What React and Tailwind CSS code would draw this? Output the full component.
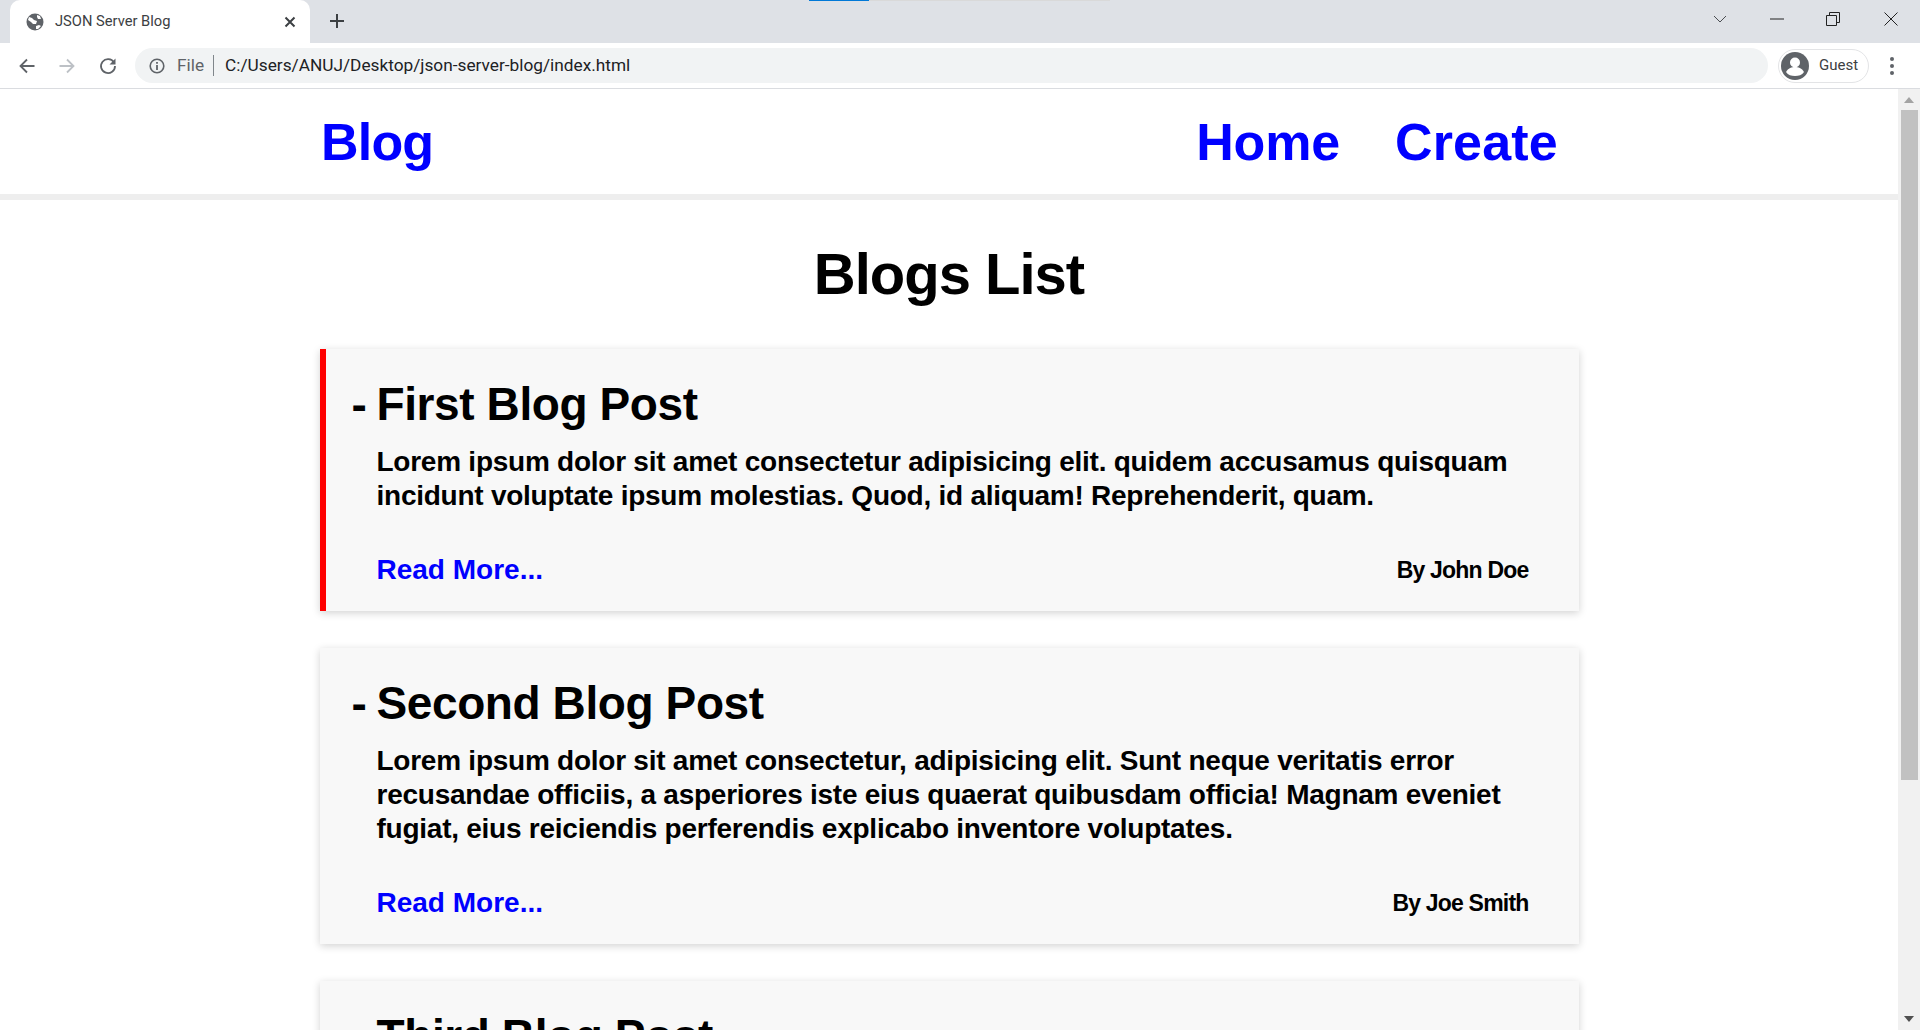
import React from "react";

function Globe() {
  return (
    <svg width="18" height="18" viewBox="0 0 18 18" className="shrink-0">
      <circle cx="9" cy="9" r="8.5" fill="#5f6368" />
      <path d="M3 4l3 1 2 2 3 1-1 3H7L5 9 2 7zM11 2l3 1 1 3-3 0-1-2zM10 13l3-1 2 1-3 3-2 0z" fill="#fff" />
    </svg>
  );
}

function Post({ title, lines, author, accent }) {
  return (
    <div className={`${accent ? "border-l-[6px] border-[#ff0000] pl-[26px]" : "pl-[32px]"} shrink-0 bg-[#f8f8f8] pr-[50px] pt-[30px] pb-[24px] shadow-[0_2px_8px_rgba(0,0,0,0.18)] mb-[37px]`}>
      <h2 className="flex text-[46px] leading-[50px] font-bold text-black tracking-[-0.4px]">
        <span className="w-[25px] shrink-0">-</span>
        <span>{title}</span>
      </h2>
      <div className="ml-[25px] mt-[16px] text-[28px] leading-[34px] font-bold text-black tracking-[-0.25px]">
        {lines.map((l) => (
          <div key={l} className="whitespace-nowrap">{l}</div>
        ))}
      </div>
      <div className="ml-[25px] mt-[40px] flex items-center justify-between">
        <a className="text-[28px] leading-[34px] font-bold text-[#0000ff]">Read More...</a>
        <span className="text-[23px] leading-[34px] font-bold text-black tracking-[-0.8px]">{author}</span>
      </div>
    </div>
  );
}

export default function App() {
  return (
    <div className="flex h-[1030px] w-[1920px] flex-col overflow-hidden bg-white font-['Liberation_Sans',sans-serif]">
      {/* tab strip */}
      <div className="relative flex h-[43px] shrink-0 items-end bg-[#dee1e6]">
        <div className="absolute left-[809px] top-0 h-px w-[60px] bg-[#0078d7]" />
        <div className="absolute left-[869px] top-0 h-px w-[241px] bg-[#d9d9d9]" />
        <div className="ml-[10px] flex h-[43px] w-[300px] items-center rounded-t-[10px] bg-white pl-[16px] pr-[14px]">
          <Globe />
          <span className="ml-[11px] flex-1 font-['Roboto',sans-serif] text-[14.7px] text-[#3c4043]">JSON Server Blog</span>
          <svg width="12" height="12" viewBox="0 0 12 12"><path d="M1.5 1.5l9 9M10.500 1.5l-9 9" stroke="#3c4043" strokeWidth="2" /></svg>
        </div>
        <svg className="ml-[19px] mb-[14px]" width="16" height="16" viewBox="0 0 16 16"><path d="M8 1v14M1 8h14" stroke="#3c4043" strokeWidth="2" /></svg>
        <div className="ml-auto mb-[17px] flex items-center">
          <svg width="14" height="9" viewBox="0 0 14 9"><path d="M1 1l6 6 6-6" fill="none" stroke="#4a4d51" strokeWidth="1" /></svg>
          <svg className="ml-[43px]" width="14" height="2" viewBox="0 0 14 2"><path d="M0 1h14" stroke="#222" strokeWidth="1" /></svg>
          <svg className="ml-[42px]" width="14" height="14" viewBox="0 0 14 14"><path d="M.5 3.500h10v10H.5zM3.500 3.500v-3h10v10h-3" fill="none" stroke="#222" strokeWidth="1" /></svg>
          <svg className="ml-[44px] mr-[22px]" width="14" height="14" viewBox="0 0 14 14"><path d="M.5.5l13 13M13.500.5l-13 13" stroke="#222" strokeWidth="1" /></svg>
        </div>
      </div>
      {/* toolbar */}
      <div className="flex h-[46px] shrink-0 items-center border-b border-[#dadce0] bg-white">
        <svg className="ml-[19px]" width="16" height="16" viewBox="0 0 16 16"><path d="M15.500 8H2M8 1.500L1.500 8 8 14.500" fill="none" stroke="#5f6368" strokeWidth="1.8" /></svg>
        <svg className="ml-[24px]" width="16" height="16" viewBox="0 0 16 16"><path d="M.5 8H14M8 1.500L14.500 8 8 14.500" fill="none" stroke="#bdc1c6" strokeWidth="1.8" /></svg>
        <svg className="ml-[24px]" width="18" height="18" viewBox="0 0 18 18"><path d="M15 5.500A7 7 0 1 0 16 9" fill="none" stroke="#5f6368" strokeWidth="1.8" /><path d="M16.500 1.500v6h-6z" fill="#5f6368" /></svg>
        <div className="ml-[18px] flex h-[35px] w-[1633px] items-center rounded-full bg-[#f1f3f4] pl-[14px] font-['Roboto',sans-serif] text-[17.25px]">
          <svg width="16" height="16" viewBox="0 0 16 16"><circle cx="8" cy="8" r="6.800" fill="none" stroke="#5f6368" strokeWidth="1.6" /><path d="M8 7v5M8 4v1.800" stroke="#5f6368" strokeWidth="1.8" /></svg>
          <span className="ml-[12px] text-[#5f6368]">File</span>
          <span className="ml-[9px] h-[21px] w-px bg-[#80868b]" />
          <span className="ml-[11px] text-[#202124]">C:/Users/ANUJ/Desktop/json-server-blog/index.html</span>
        </div>
        <div className="ml-[10px] flex h-[34px] w-[91px] items-center rounded-full border border-[#e3e4e6] pl-[2px]">
          <svg width="28" height="28" viewBox="0 0 28 28">
            <circle cx="14" cy="14" r="14" fill="#5f6368" />
            <circle cx="14" cy="10.500" r="5" fill="#fff" />
            <path d="M5 20c2-4 6-5 9-5s7 1 9 5c-2 3-5.500 4-9 4s-7-1-9-4z" fill="#fff" />
          </svg>
          <span className="ml-[10px] font-['Roboto',sans-serif] text-[15px] text-[#3c4043]">Guest</span>
        </div>
        <div className="ml-[21px] flex flex-col gap-[3px]">
          <span className="h-[4px] w-[4px] rounded-full bg-[#5f6368]" />
          <span className="h-[4px] w-[4px] rounded-full bg-[#5f6368]" />
          <span className="h-[4px] w-[4px] rounded-full bg-[#5f6368]" />
        </div>
      </div>
      {/* page */}
      <div className="flex min-h-0 flex-1">
        <div className="flex min-w-0 flex-1 flex-col overflow-hidden">
          <nav className="flex h-[111px] shrink-0 items-center border-b-[6px] border-[#eeeeee] pl-[321px] pr-[340px] text-[52px] font-bold text-[#0000ff] tracking-[-0.2px]">
            <a className="tracking-[-0.8px]">Blog</a>
            <a className="ml-auto">Home</a>
            <a className="ml-[55px] tracking-[0.2px]">Create</a>
          </nav>
          <div className="mx-auto flex w-[1259px] shrink-0 flex-col">
            <h1 className="mb-[40px] mt-[39px] text-center text-[58px] leading-[70px] font-bold text-black tracking-[-1px]">Blogs List</h1>
            <Post
              accent
              title="First Blog Post"
              author="By John Doe"
              lines={[
                "Lorem ipsum dolor sit amet consectetur adipisicing elit. quidem accusamus quisquam",
                "incidunt voluptate ipsum molestias. Quod, id aliquam! Reprehenderit, quam.",
              ]}
            />
            <Post
              title="Second Blog Post"
              author="By Joe Smith"
              lines={[
                "Lorem ipsum dolor sit amet consectetur, adipisicing elit. Sunt neque veritatis error",
                "recusandae officiis, a asperiores iste eius quaerat quibusdam officia! Magnam eveniet",
                "fugiat, eius reiciendis perferendis explicabo inventore voluptates.",
              ]}
            />
            <Post title="Third Blog Post" author="" lines={["Lorem ipsum dolor sit amet"]} />
          </div>
        </div>
        {/* scrollbar */}
        <div className="flex w-[22px] shrink-0 flex-col items-center bg-[#f1f1f1]">
          <div className="mt-[8px] h-0 w-0 border-x-[5px] border-b-[6px] border-x-transparent border-b-[#a3a3a3]" />
          <div className="mt-[7px] h-[670px] w-[17px] bg-[#c1c1c1]" />
          <div className="mt-auto mb-[8px] h-0 w-0 border-x-[5px] border-t-[6px] border-x-transparent border-t-[#505050]" />
        </div>
      </div>
    </div>
  );
}
